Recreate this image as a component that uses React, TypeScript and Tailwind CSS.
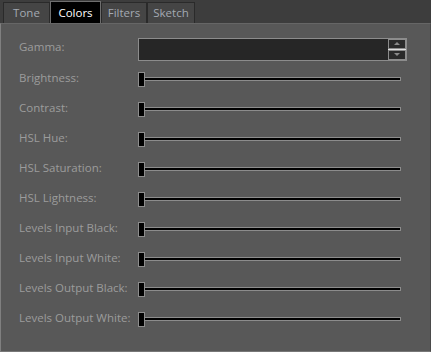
import React from "react";

const labels = [
  "Brightness:",
  "Contrast:",
  "HSL Hue:",
  "HSL Saturation:",
  "HSL Lightness:",
  "Levels Input Black:",
  "Levels Input White:",
  "Levels Output Black:",
  "Levels Output White:",
];

const tabs: { t: string; w: string }[] = [
  { t: "Tone", w: "w-[47px]" },
  { t: "Colors", w: "w-[51px]" },
  { t: "Filters", w: "w-[46px]" },
  { t: "Sketch", w: "w-[48px]" },
];

function Slider() {
  return (
    <div className="flex items-center w-[263px] h-[15px] relative">
      <div className="w-[7px] h-[15px] bg-black border border-[#8c8c8c] shrink-0 z-10" />
      <div className="flex-1 h-[4px] bg-black border border-[#8c8c8c] -ml-px" />
    </div>
  );
}

export default function App() {
  return (
    <div
      className="w-[431px] h-[352px] bg-[#3d3d3d] flex flex-col text-[11.5px]"
      style={{ fontFamily: '"Open Sans", "Noto Sans", sans-serif' }}
    >
      <div className="flex h-[23px] items-end pl-[3px]">
        {tabs.map(({ t, w }) =>
          t === "Colors" ? (
            <div
              key={t}
              className={`${w} h-[22px] bg-black border border-[#6e6e6e] border-b-0 text-white flex items-center justify-center`}
            >
              {t}
            </div>
          ) : (
            <div
              key={t}
              className={`${w} h-[21px] bg-[#454545] border border-[#2a2a2a] border-b-0 text-[#a3a9b2] flex items-center justify-center`}
            >
              {t}
            </div>
          )
        )}
      </div>
      <div className="flex-1 bg-[#585858] border-l border-l-[#808080] border-t border-t-[#666] border-b border-b-[#777] border-r border-r-[#4a4a4a] pt-[10px]">
        <div className="grid grid-cols-[137px_1fr] auto-rows-[30px] items-center">
          <div className="pl-[18px] pb-[4px] text-[#9c9c9c]">Gamma:</div>
          <div className="flex h-[23px] w-[269px] border border-[#8c8c8c] bg-[#262626]">
            <div className="flex-1" />
            <div className="w-[18px] flex flex-col bg-[#e0e0e0] gap-px">
              <div className="flex-1 bg-[#2a2a2a] border border-[#8c8c8c] flex items-center justify-center">
                <div className="w-0 h-0 border-l-[3px] border-r-[3px] border-b-[3px] border-l-transparent border-r-transparent border-b-[#8a8a8a]" />
              </div>
              <div className="flex-1 bg-[#2a2a2a] border border-[#8c8c8c] flex items-center justify-center">
                <div className="w-0 h-0 border-l-[3px] border-r-[3px] border-t-[3px] border-l-transparent border-r-transparent border-t-[#8a8a8a]" />
              </div>
            </div>
          </div>
          {labels.map((l) => (
            <React.Fragment key={l}>
              <div className="pl-[18px] pb-[3px] text-[#9c9c9c]">{l}</div>
              <Slider />
            </React.Fragment>
          ))}
        </div>
      </div>
    </div>
  );
}
